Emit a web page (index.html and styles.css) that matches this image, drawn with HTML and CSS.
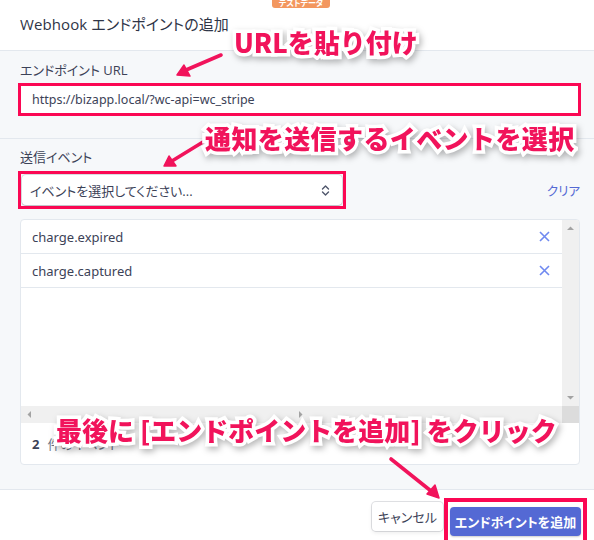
FILE: index.html
```html
<!DOCTYPE html>
<html lang="ja">
<head>
<meta charset="utf-8">
<link rel="stylesheet" href="styles.css">
</head>
<body>
<div class="modal">
  <header class="hd">
    <span class="badge">テストデータ</span>
    <h1 class="title">Webhook エンドポイントの追加</h1>
  </header>

  <section class="sec sec1">
    <div class="label">エンドポイント URL</div>
    <div class="hl hl-url">
      <div class="input">https://bizapp.local/?wc-api=wc_stripe</div>
    </div>
  </section>

  <section class="sec sec2">
    <div class="label">送信イベント</div>
    <div class="select-row">
      <div class="hl hl-sel">
        <div class="select">
          <span>イベントを選択してください...</span>
          <svg class="chev" width="9" height="13" viewBox="0 0 9 13"><path d="M1.5 5 L4.5 2 L7.5 5 M1.5 8 L4.5 11 L7.5 8" fill="none" stroke="#4f566b" stroke-width="1.4" stroke-linecap="round" stroke-linejoin="round"/></svg>
        </div>
      </div>
      <span class="clear">クリア</span>
    </div>

    <div class="list">
      <div class="scroll">
        <div class="viewport">
          <div class="item"><span>charge.expired</span><svg class="x" width="11" height="11" viewBox="0 0 11 11"><path d="M1 1 L10 10 M10 1 L1 10" stroke="#6f89f0" stroke-width="1.6"/></svg></div>
          <div class="item"><span>charge.captured</span><svg class="x" width="11" height="11" viewBox="0 0 11 11"><path d="M1 1 L10 10 M10 1 L1 10" stroke="#6f89f0" stroke-width="1.6"/></svg></div>
        </div>
        <div class="vbar">
          <svg width="17" height="17" viewBox="0 0 17 17"><path d="M5 10 L8.5 6.5 L12 10 Z" fill="#a3a3a3"/></svg>
          <svg width="17" height="17" viewBox="0 0 17 17"><path d="M5 7 L8.5 10.5 L12 7 Z" fill="#a3a3a3"/></svg>
        </div>
      </div>
      <div class="hbar">
        <svg width="17" height="17" viewBox="0 0 17 17"><path d="M10 5 L6.5 8.5 L10 12 Z" fill="#a3a3a3"/></svg>
        <svg width="17" height="17" viewBox="0 0 17 17"><path d="M7 5 L10.5 8.5 L7 12 Z" fill="#a3a3a3"/></svg>
        <div class="corner"></div>
      </div>
      <div class="foot"><b>2</b><span>件のイベント</span></div>
    </div>
  </section>

  <footer class="ft">
    <button class="btn cancel">キャンセル</button>
    <div class="hl hl-btn"><button class="btn add">エンドポイントを追加</button></div>
  </footer>

  <svg class="arrows" width="594" height="540" viewBox="0 0 594 540">
    <g stroke="#f1135b" stroke-width="3.6" stroke-linecap="round" fill="#f1135b">
      <line x1="221" y1="55" x2="186" y2="70"/>
      <polygon points="177,75 184,65 190,76" stroke-width="1.5" stroke-linejoin="round"/>
      <line x1="203" y1="142" x2="172" y2="161"/>
      <polygon points="164,166 169,156 176,166" stroke-width="1.5" stroke-linejoin="round"/>
      <line x1="391" y1="459" x2="431" y2="491"/>
      <polygon points="439,498 427,494 435,485" stroke-width="1.5" stroke-linejoin="round"/>
    </g>
  </svg>

  <div class="note n1">URLを貼り付け</div>
  <div class="note n2">通知を送信するイベントを選択</div>
  <div class="note n3">最後に [エンドポイントを追加] をクリック</div>
</div>
</body>
</html>
```

FILE: styles.css
```css
* { box-sizing: border-box; }
html, body { margin: 0; padding: 0; }
body {
  width: 594px;
  height: 540px;
  overflow: hidden;
  background: #ffffff;
  font-family: "Open Sans", "Noto Sans CJK JP", sans-serif;
  color: #3c4257;
  font-feature-settings: "palt";
}
.modal {
  position: relative;
  width: 594px;
  height: 540px;
  display: flex;
  flex-direction: column;
}
.hd {
  height: 51px;
  border-bottom: 1px solid #e3e8ee;
  display: flex;
  align-items: center;
  padding: 0 20px 4px;
}
.title {
  margin: 0;
  font-size: 15px;
  font-weight: 400;
  color: #2f3547;
  letter-spacing: 0.1px;
}
.badge {
  position: absolute;
  left: 272px;
  top: -6px;
  width: 58px;
  height: 14px;
  background: #f3975f;
  color: #fff;
  border-radius: 3px;
  font-size: 8px;
  font-weight: 700;
  display: flex;
  align-items: flex-end;
  justify-content: center;
  line-height: 10px;
}
.sec {
  background: #f6f8fa;
  border-bottom: 1px solid #e3e8ee;
  padding: 0 14px 0 20px;
}
.sec1 { padding-top: 11px; padding-bottom: 21px; height: 88px; }
.label {
  font-size: 13px;
  line-height: 16px;
  color: #3c4257;
}
.hl {
  border: 3px solid #fb0753;
}
.hl-url {
  margin: 5px -1px 0 -2px;
  background: #fff;
}
.input {
  height: 27px;
  padding: 0 11px;
  display: flex;
  align-items: center;
  font-size: 12.5px;
  color: #3c4257;
  font-family: "Noto Sans", "Noto Sans CJK JP", sans-serif;
}
.sec2 { padding-top: 10px; padding-bottom: 23px; height: 351px; }
.select-row {
  margin-top: 6px;
  display: flex;
  align-items: center;
  justify-content: space-between;
}
.hl-sel {
  margin-left: -2px;
  width: 328px;
  height: 38px;
  padding: 1px;
}
.select {
  height: 30px;
  background: #fff;
  border-radius: 4px;
  box-shadow: 0 0 0 1px rgba(60,66,87,0.16), 0 1px 1px rgba(0,0,0,0.12);
  display: flex;
  align-items: center;
  justify-content: space-between;
  padding: 0 12px 0 8px;
  font-size: 13px;
  color: #3c4257;
}
.chev { display: block; }
.clear {
  font-size: 12.5px;
  color: #5469d4;
}
.list {
  margin-top: 10px;
  background: #fff;
  border: 1px solid #e3e8ee;
  border-radius: 4px;
  overflow: hidden;
}
.scroll {
  display: flex;
  height: 186px;
}
.viewport { flex: 1; }
.item {
  height: 34px;
  border-bottom: 1px solid #e3e8ee;
  display: flex;
  align-items: center;
  justify-content: space-between;
  padding: 0 12px 0 11px;
  font-size: 13px;
  font-family: "Noto Sans", sans-serif;
  color: #3c4257;
}
.x { display: block; }
.vbar {
  width: 17px;
  background: #f0f0f0;
  display: flex;
  flex-direction: column;
  justify-content: space-between;
}
.vbar svg, .hbar svg { display: block; }
.hbar {
  height: 17px;
  background: #f0f0f0;
  display: flex;
  align-items: center;
  justify-content: space-between;
}
.corner { width: 17px; height: 17px; background: #dcdcdc; }
.foot {
  height: 41px;
  display: flex;
  align-items: center;
  padding: 0 11px;
  font-size: 13px;
  gap: 8px;
}
.foot b { font-weight: 700; color: #3c4257; font-family: "Open Sans", sans-serif; }
.foot span { color: #697386; }
.ft {
  flex: 1;
  display: flex;
  align-items: center;
  justify-content: flex-end;
  padding: 6px 7px 0 0;
  gap: 1px;
  background: #fff;
}
.btn {
  height: 29px;
  border: none;
  border-radius: 4px;
  font-size: 13px;
  font-family: "Open Sans", "Noto Sans CJK JP", sans-serif;
  font-feature-settings: "palt";
  padding: 0;
}
.cancel {
  width: 71px;
  background: #fff;
  color: #3c4257;
  box-shadow: 0 0 0 1px rgba(60,66,87,0.16), 0 2px 4px rgba(0,0,0,0.08);
  margin-bottom: 3px;
}
.hl-btn {
  border-width: 4px;
  padding: 5px 2px;
  margin-bottom: -6px;
}
.add {
  width: 131px;
  display: block;
  background: #5469d4;
  color: #fff;
  font-weight: 700;
  box-shadow: 0 1px 2px rgba(0,0,0,0.2);
}
.arrows {
  position: absolute;
  left: 0;
  top: 0;
  pointer-events: none;
}
.note {
  position: absolute;
  font-family: "Noto Sans CJK JP", sans-serif;
  font-weight: 900;
  font-size: 26px;
  line-height: 28px;
  color: #f1135b;
  white-space: nowrap;
  font-feature-settings: normal;
  -webkit-text-stroke: 7px #ffffff;
  paint-order: stroke fill;
  filter: drop-shadow(2px 3px 3px rgba(0,0,0,0.28));
}
.n1 { left: 234px; top: 28px; }
.n2 { left: 205px; top: 124px; letter-spacing: 0.4px; }
.n3 { left: 56px; top: 416px; }
```
